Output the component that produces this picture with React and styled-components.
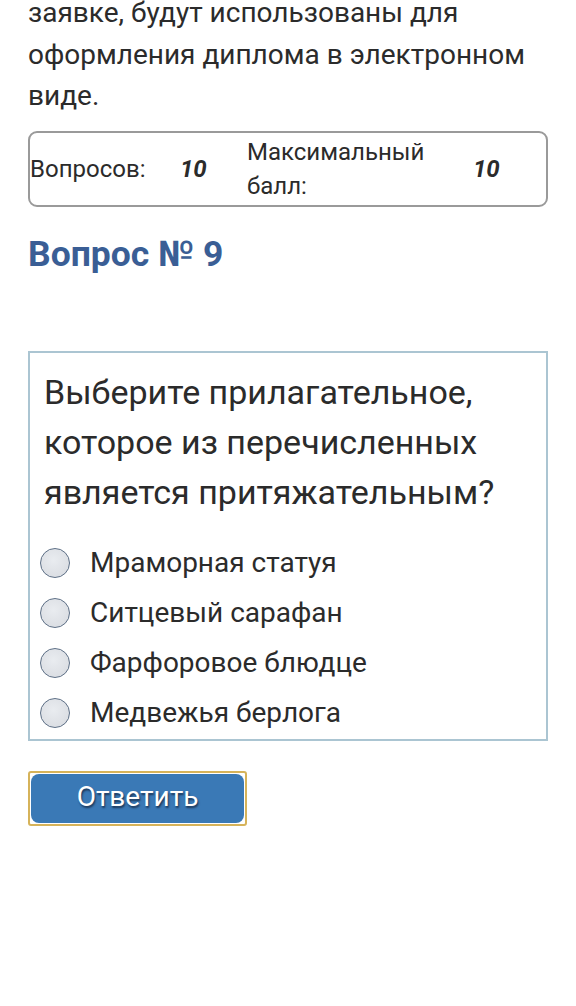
import React from 'react'
import styled, { createGlobalStyle } from 'styled-components'

const Global = createGlobalStyle`
  body {
    margin: 0;
    background: #fff;
    font-family: Roboto, "Liberation Sans", sans-serif;
    color: #2b2b2b;
  }
`

const Page = styled.div`
  padding: 0 28px 40px;
`

const Intro = styled.p`
  margin: -8px 0 0;
  font-size: 28px;
  line-height: 41.5px;
`

const Summary = styled.div`
  margin-top: 14px;
  border: 2px solid #9a9a9a;
  border-radius: 9px;
  padding: 2px 0;
  display: grid;
  grid-template-columns: 150px 67px 226px 1fr;
  align-items: center;
  font-size: 24px;
  line-height: 34px;
`

const Label = styled.div``

const Value = styled.div`
  font-weight: 700;
  font-style: italic;
`

const Heading = styled.h2`
  margin: 27px 0 77px;
  font-size: 35.5px;
  line-height: 40px;
  font-weight: 700;
  color: #3a5e95;
`

const QuestionBox = styled.div`
  border: 2px solid #abc5d2;
  padding: 14px 14px 1px;
`

const QuestionText = styled.div`
  font-size: 34px;
  line-height: 50px;
  margin-bottom: 21px;
`

const Options = styled.div`
  display: flex;
  flex-direction: column;
`

const Option = styled.label`
  display: flex;
  align-items: center;
  gap: 20px;
  height: 50px;
  margin-left: -4px;
  font-size: 28px;
`

const Radio = styled.span`
  width: 28px;
  height: 28px;
  border-radius: 50%;
  border: 1.5px solid #5d6f86;
  background: radial-gradient(circle at 45% 40%, #e9ecf0 0%, #dcdfe4 70%, #cfd4da 100%);
  flex-shrink: 0;
`

const ButtonFrame = styled.div`
  margin-top: 30px;
  width: 219px;
  height: 55px;
  box-sizing: border-box;
  border: 2px solid #d6b35a;
  border-radius: 3px;
  padding: 1px;
`

const Button = styled.button`
  width: 100%;
  height: 100%;
  border: none;
  border-radius: 8px;
  background: #3a79b6;
  color: #fff;
  font-family: Roboto, "Liberation Sans", sans-serif;
  font-size: 28px;
  padding-bottom: 4px;
  text-shadow: 1px 2px 2px #1c3656;
  cursor: pointer;
`

const answers = [
  'Мраморная статуя',
  'Ситцевый сарафан',
  'Фарфоровое блюдце',
  'Медвежья берлога',
]

export default function App() {
  return (
    <>
      <Global />
      <Page>
        <Intro>
          заявке, будут использованы для оформления диплома в электронном виде.
        </Intro>
        <Summary>
          <Label>Вопросов:</Label>
          <Value>10</Value>
          <Label>Максимальный балл:</Label>
          <Value>10</Value>
        </Summary>
        <Heading>Вопрос № 9</Heading>
        <QuestionBox>
          <QuestionText>
            Выберите прилагательное, которое из перечисленных является притяжательным?
          </QuestionText>
          <Options>
            {answers.map(a => (
              <Option key={a}>
                <Radio />
                {a}
              </Option>
            ))}
          </Options>
        </QuestionBox>
        <ButtonFrame>
          <Button>Ответить</Button>
        </ButtonFrame>
      </Page>
    </>
  )
}
